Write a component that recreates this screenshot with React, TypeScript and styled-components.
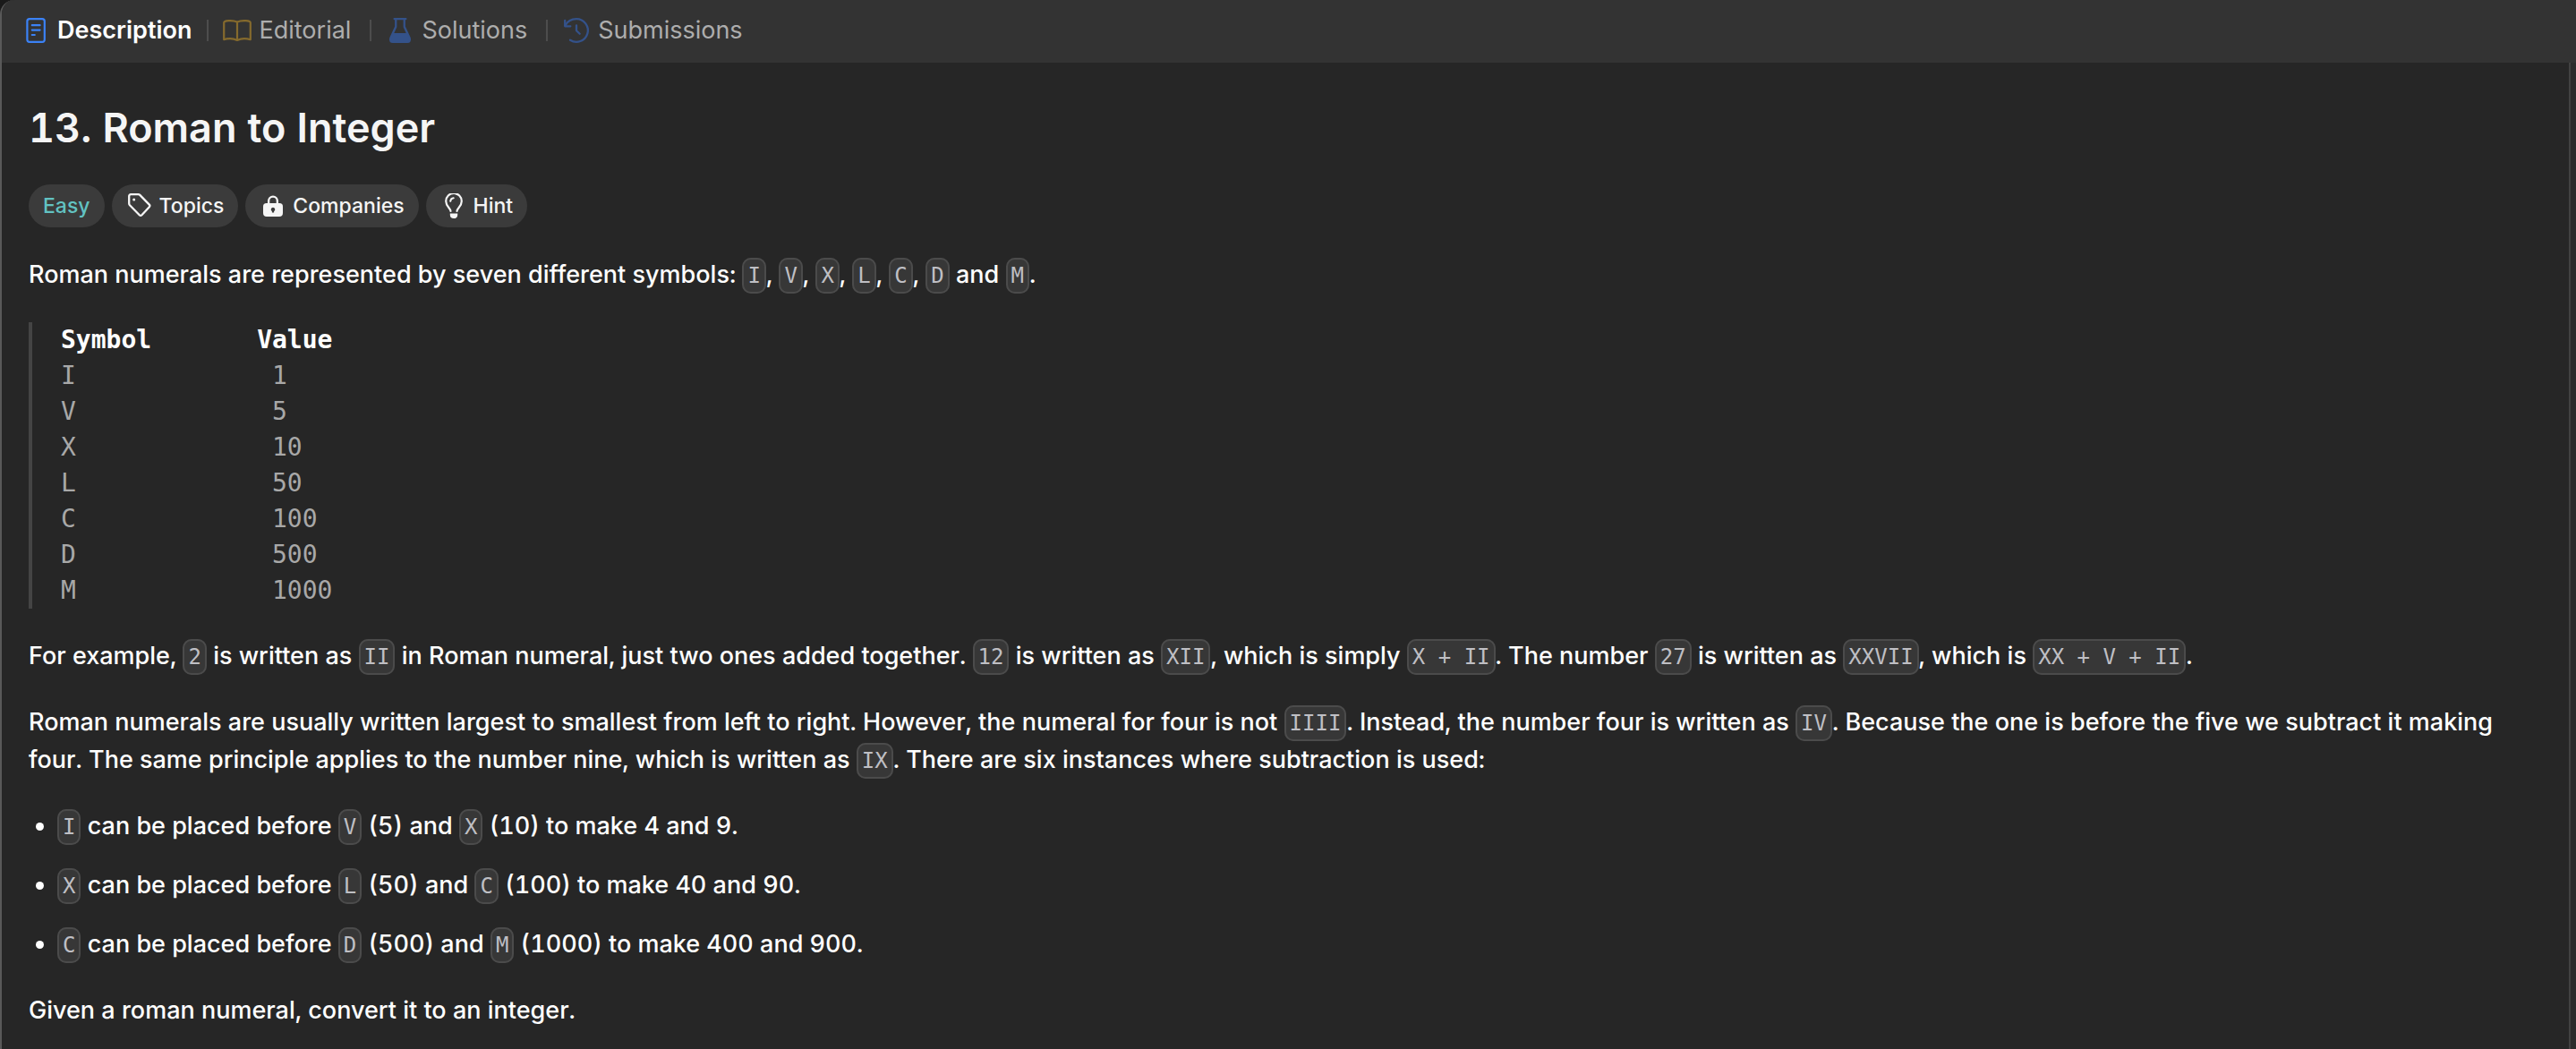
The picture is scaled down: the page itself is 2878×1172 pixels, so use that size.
import React from "react";
import styled, { createGlobalStyle } from "styled-components";

const sans = `Inter, "Liberation Sans", sans-serif`;
const mono = `"DejaVu Sans Mono", "Liberation Mono", monospace`;

const GlobalStyle = createGlobalStyle`
  *, *::before, *::after { box-sizing: border-box; }
  html { background: #1a1a1a; }
  body {
    margin: 0;
    font-family: ${sans};
    font-variant-numeric: tabular-nums;
    color: #fff;
  }
`;

const Panel = styled.div`
  display: flex;
  flex-direction: column;
  min-height: 100vh;
  border-left: 2px solid #595959;
  border-top-left-radius: 16px;
  background: #262626;
  overflow: hidden;
`;

const TabBar = styled.nav`
  display: flex;
  align-items: center;
  height: 70px;
  padding: 0 24px 2px;
  background: #333;
`;

const Tab = styled.button<{ $active?: boolean }>`
  display: flex;
  align-items: center;
  gap: 10px;
  padding: 0 ${(p) => (p.$active ? 17 : 21)}px 0 0;
  border: 0;
  background: none;
  color: ${(p) => (p.$active ? "#fff" : "#adadad")};
  font-family: inherit;
  font-size: 27px;
  font-weight: ${(p) => (p.$active ? 600 : 400)};
  line-height: 40px;
  cursor: pointer;
`;

const TabIcon = styled.svg<{ $color: string }>`
  width: 28px;
  height: 28px;
  overflow: visible;
  color: ${(p) => p.$color};
`;

const Separator = styled.span`
  width: 2px;
  height: 24px;
  margin-right: 18px;
  background: #4d4d4d;
`;

const Body = styled.div`
  display: flex;
  flex: 1;
`;

const Content = styled.main`
  flex: 1;
  min-width: 0;
  padding: 42px 36px 22px 30px;
`;

const ScrollTrack = styled.div`
  width: 8px;
  border-left: 2px solid #424242;
  background: #2c2c2c;
`;

const Title = styled.h1`
  margin: 0;
  color: #f5f5f5;
  font-size: 45px;
  font-weight: 600;
  line-height: 62px;
`;

const Pills = styled.div`
  display: flex;
  gap: 8px;
  margin: 32px 0;
`;

const Pill = styled.button<{ $color?: string }>`
  display: flex;
  align-items: center;
  gap: 8px;
  height: 48px;
  padding: 0 16px;
  border: 0;
  border-radius: 24px;
  background: #3b3b3b;
  color: ${(p) => p.$color ?? "#f5f5f5"};
  font-family: inherit;
  font-size: 23px;
  font-weight: 500;
  line-height: 32px;
  cursor: pointer;
`;

const PillIcon = styled.svg`
  width: 28px;
  height: 28px;
  margin-left: 1px;
`;

const Paragraph = styled.p`
  margin: 0 0 32px;
  font-size: 27px;
  font-weight: 500;
  line-height: 42px;
`;

const Code = styled.code`
  padding: 4px;
  border: 2px solid #4b4b4b;
  border-radius: 10px;
  background: #373737;
  color: #bfbfc4;
  font-family: ${mono};
  font-size: 24px;
  font-weight: 400;
  line-height: 1;
  white-space: nowrap;
`;

const SymbolTable = styled.table`
  margin: 0 0 32px;
  padding-left: 32px;
  border-left: 4px solid #444;
  border-spacing: 0;
  font-family: ${mono};
  font-size: 28px;
  line-height: 40px;
  text-align: left;

  th {
    padding: 0;
    color: #fff;
  }
  th:first-child {
    width: 13ch;
  }
  td {
    padding: 0;
    color: #a8a8a8;
  }
  td:last-child {
    padding-left: 1ch;
  }
`;

const Rules = styled.ul`
  display: flex;
  flex-direction: column;
  gap: 24px;
  margin: 0 0 32px;
  padding-left: 32px;
  font-size: 27px;
  font-weight: 500;
  line-height: 42px;
`;

const symbols = [
  ["I", "1"],
  ["V", "5"],
  ["X", "10"],
  ["L", "50"],
  ["C", "100"],
  ["D", "500"],
  ["M", "1000"],
];

const rules = [
  { from: "I", a: "V", av: "5", b: "X", bv: "10", result: "4 and 9" },
  { from: "X", a: "L", av: "50", b: "C", bv: "100", result: "40 and 90" },
  { from: "C", a: "D", av: "500", b: "M", bv: "1000", result: "400 and 900" },
];

const DescriptionIcon = () => (
  <TabIcon viewBox="0 0 28 28" $color="#3b82f6" fill="none" stroke="currentColor" strokeWidth="2.2" strokeLinecap="round" aria-hidden>
    <rect x="4.4" y="1.1" width="19.4" height="25.8" rx="2.6" />
    <path d="M9.8 8.2h8.8M9.8 13.6h8.8M9.8 19h3" />
  </TabIcon>
);

const EditorialIcon = () => (
  <TabIcon viewBox="0 0 28 28" $color="#856a2d" fill="none" stroke="currentColor" strokeWidth="2.2" strokeLinejoin="round" aria-hidden>
    <path d="M14 4.6C11.6 3.4 8 2.9 4.6 3.1C2.8 3.2 -.8 3.3 -.8 5.4V24.2C3 23 9.4 22.6 14 25C18.6 22.6 25 23 28.8 24.2V5.4C28.8 3.3 25.2 3.2 23.4 3.1C20 2.9 16.4 3.4 14 4.6ZM14 4.6V25" />
  </TabIcon>
);

const SolutionsIcon = () => (
  <TabIcon viewBox="0 0 28 28" $color="#34528a" fill="currentColor" aria-hidden>
    <path
      fillRule="evenodd"
      d="M7.5 0H20.5Q21.5 0 21.5 1.1T20.5 2.3H19.9V9.6L25.6 21.8Q26.8 24.6 25.5 26.5Q24.5 28 22.3 28H5.7Q3.5 28 2.5 26.5Q1.2 24.6 2.4 21.8L8.1 9.6V2.3H7.5Q6.5 2.3 6.5 1.1T7.5 0ZM10.4 2.3V10.2L7.3 17H20.7L17.6 10.2V2.3Z"
    />
  </TabIcon>
);

const SubmissionsIcon = () => (
  <TabIcon viewBox="0 0 28 28" $color="#34528a" fill="none" stroke="currentColor" strokeWidth="2.3" strokeLinecap="round" strokeLinejoin="round" aria-hidden>
    <path d="M1.6 8.4C4 3.8 8.7 1.2 14 1.2A12.8 12.8 0 1 1 7 24.7" />
    <path d="M1.2 3V9.3H7.3" />
    <path d="M14 8.3V14.2L17.7 17.8" />
  </TabIcon>
);

const TopicsIcon = () => (
  <PillIcon viewBox="0 0 28 28" fill="none" stroke="currentColor" strokeWidth="2.3" strokeLinejoin="round" aria-hidden>
    <path d="M2.2 3.2Q2.2 1.2 4.2 1.2L12.6 1.2Q13.6 1.2 14.3 1.9L24.8 12.6Q26 13.9 24.8 15.2L16.4 24.2Q15.1 25.5 13.8 24.2L3 13.2Q2.2 12.3 2.2 11.2Z" />
    <circle cx="7.7" cy="7" r="1.5" fill="currentColor" stroke="none" />
  </PillIcon>
);

const CompaniesIcon = () => (
  <PillIcon viewBox="0 0 28 28" fill="currentColor" aria-hidden>
    <path
      fillRule="evenodd"
      d="M8 11V8.5a6 6 0 0 1 12 0V11h1.3q3.7 0 3.7 3.7v7.3q0 4-4 4H7q-4 0-4-4v-7.3q0-3.7 3.7-3.7ZM10.3 11h7.4V8.5a3.7 3.7 0 0 0-7.4 0ZM14 15.8a2.3 2.3 0 0 0-1.1 4.3v1.5h2.2v-1.5a2.3 2.3 0 0 0-1.1-4.3Z"
    />
  </PillIcon>
);

const HintIcon = () => (
  <PillIcon viewBox="0 0 28 28" fill="none" stroke="currentColor" strokeWidth="2.2" strokeLinecap="round" strokeLinejoin="round" aria-hidden>
    <path d="M10.5 20C10.5 16.5 5.2 14.8 5.2 8.8A8.8 8.8 0 0 1 22.8 8.8C22.8 14.8 17.5 16.5 17.5 20" />
    <path d="M10.2 8.8A4 4 0 0 1 13.7 5.3" strokeWidth="2" />
    <path d="M9.8 22.4H18.2V24Q18.2 28 14 28T9.8 24Z" fill="currentColor" stroke="none" />
  </PillIcon>
);

export default function App() {
  return (
    <>
      <GlobalStyle />
      <Panel>
        <TabBar>
          <Tab type="button" $active>
            <DescriptionIcon />
            Description
          </Tab>
          <Separator />
          <Tab type="button">
            <EditorialIcon />
            Editorial
          </Tab>
          <Separator />
          <Tab type="button">
            <SolutionsIcon />
            Solutions
          </Tab>
          <Separator />
          <Tab type="button">
            <SubmissionsIcon />
            Submissions
          </Tab>
        </TabBar>
        <Body>
          <Content>
            <Title>13. Roman to Integer</Title>
            <Pills>
              <Pill type="button" $color="#62c2c2">Easy</Pill>
              <Pill type="button">
                <TopicsIcon />
                Topics
              </Pill>
              <Pill type="button">
                <CompaniesIcon />
                Companies
              </Pill>
              <Pill type="button">
                <HintIcon />
                Hint
              </Pill>
            </Pills>
            <Paragraph>
              Roman numerals are represented by seven different symbols:{" "}
              <Code>I</Code>, <Code>V</Code>, <Code>X</Code>, <Code>L</Code>, <Code>C</Code>,{" "}
              <Code>D</Code> and <Code>M</Code>.
            </Paragraph>
            <SymbolTable>
              <thead>
                <tr>
                  <th scope="col">Symbol</th>
                  <th scope="col">Value</th>
                </tr>
              </thead>
              <tbody>
                {symbols.map(([symbol, value]) => (
                  <tr key={symbol}>
                    <td>{symbol}</td>
                    <td>{value}</td>
                  </tr>
                ))}
              </tbody>
            </SymbolTable>
            <Paragraph>
              For example, <Code>2</Code> is written as <Code>II</Code> in Roman numeral, just two
              ones added together. <Code>12</Code> is written as <Code>XII</Code>, which is simply{" "}
              <Code>X + II</Code>. The number <Code>27</Code> is written as <Code>XXVII</Code>,
              which is <Code>XX + V + II</Code>.
            </Paragraph>
            <Paragraph>
              Roman numerals are usually written largest to smallest from left to right. However,
              the numeral for four is not <Code>IIII</Code>. Instead, the number four is written as{" "}
              <Code>IV</Code>. Because the one is before the five we subtract it making four. The
              same principle applies to the number nine, which is written as <Code>IX</Code>. There
              are six instances where subtraction is used:
            </Paragraph>
            <Rules>
              {rules.map((r) => (
                <li key={r.from}>
                  <Code>{r.from}</Code> can be placed before <Code>{r.a}</Code> ({r.av}) and{" "}
                  <Code>{r.b}</Code> ({r.bv}) to make {r.result}.
                </li>
              ))}
            </Rules>
            <Paragraph>Given a roman numeral, convert it to an integer.</Paragraph>
          </Content>
          <ScrollTrack />
        </Body>
      </Panel>
    </>
  );
}
